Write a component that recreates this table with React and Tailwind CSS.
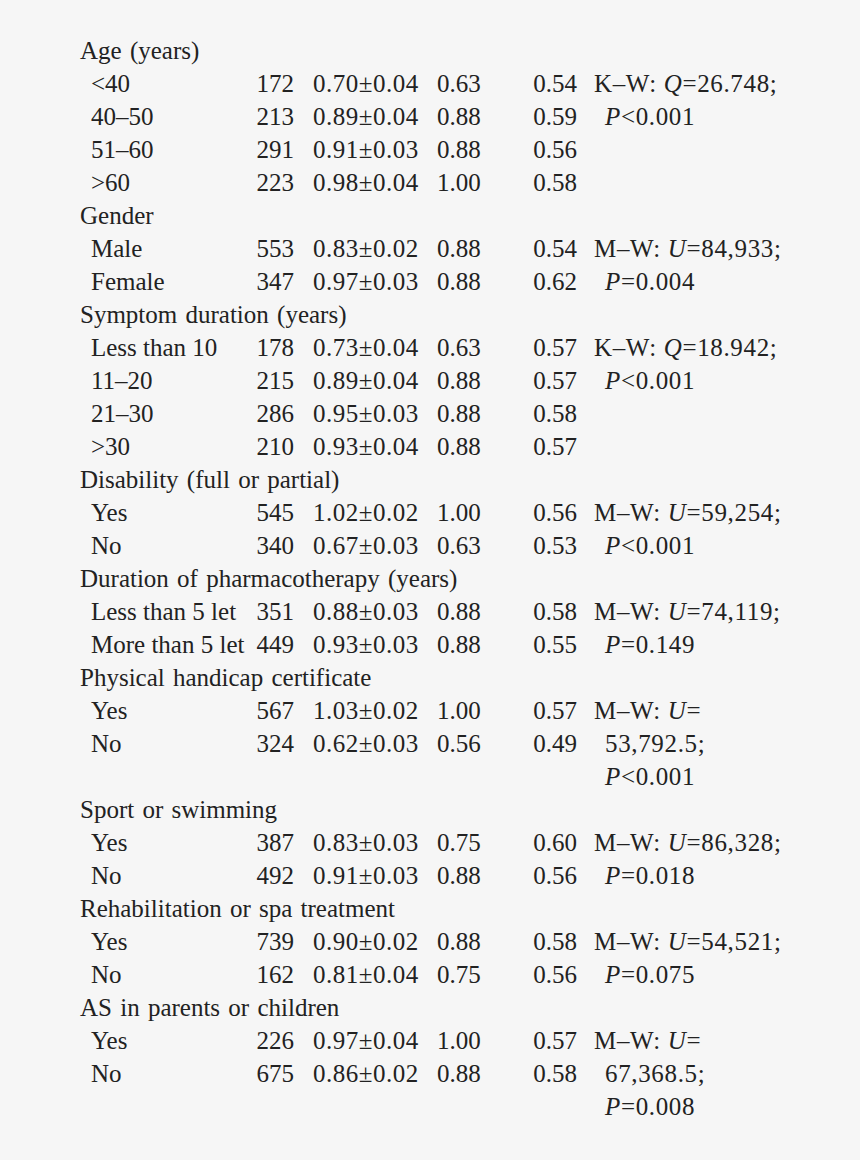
const rows = [
  { h: 'Age (years)' },
  { label: '<40', n: '172', mean: '0.70±0.04', med: '0.63', v: '0.54', test: <>K–W: <i>Q</i>=26.748;</> },
  { label: '40–50', n: '213', mean: '0.89±0.04', med: '0.88', v: '0.59', test: <><i>P</i>&lt;0.001</>, indent: true },
  { label: '51–60', n: '291', mean: '0.91±0.03', med: '0.88', v: '0.56' },
  { label: '>60', n: '223', mean: '0.98±0.04', med: '1.00', v: '0.58' },
  { h: 'Gender' },
  { label: 'Male', n: '553', mean: '0.83±0.02', med: '0.88', v: '0.54', test: <>M–W: <i>U</i>=84,933;</> },
  { label: 'Female', n: '347', mean: '0.97±0.03', med: '0.88', v: '0.62', test: <><i>P</i>=0.004</>, indent: true },
  { h: 'Symptom duration (years)' },
  { label: 'Less than 10', n: '178', mean: '0.73±0.04', med: '0.63', v: '0.57', test: <>K–W: <i>Q</i>=18.942;</> },
  { label: '11–20', n: '215', mean: '0.89±0.04', med: '0.88', v: '0.57', test: <><i>P</i>&lt;0.001</>, indent: true },
  { label: '21–30', n: '286', mean: '0.95±0.03', med: '0.88', v: '0.58' },
  { label: '>30', n: '210', mean: '0.93±0.04', med: '0.88', v: '0.57' },
  { h: 'Disability (full or partial)' },
  { label: 'Yes', n: '545', mean: '1.02±0.02', med: '1.00', v: '0.56', test: <>M–W: <i>U</i>=59,254;</> },
  { label: 'No', n: '340', mean: '0.67±0.03', med: '0.63', v: '0.53', test: <><i>P</i>&lt;0.001</>, indent: true },
  { h: 'Duration of pharmacotherapy (years)' },
  { label: 'Less than 5 let', n: '351', mean: '0.88±0.03', med: '0.88', v: '0.58', test: <>M–W: <i>U</i>=74,119;</> },
  { label: 'More than 5 let', n: '449', mean: '0.93±0.03', med: '0.88', v: '0.55', test: <><i>P</i>=0.149</>, indent: true },
  { h: 'Physical handicap certificate' },
  { label: 'Yes', n: '567', mean: '1.03±0.02', med: '1.00', v: '0.57', test: <>M–W: <i>U</i>=</> },
  { label: 'No', n: '324', mean: '0.62±0.03', med: '0.56', v: '0.49', test: <>53,792.5;</>, indent: true },
  { label: '', test: <><i>P</i>&lt;0.001</>, indent: true },
  { h: 'Sport or swimming' },
  { label: 'Yes', n: '387', mean: '0.83±0.03', med: '0.75', v: '0.60', test: <>M–W: <i>U</i>=86,328;</> },
  { label: 'No', n: '492', mean: '0.91±0.03', med: '0.88', v: '0.56', test: <><i>P</i>=0.018</>, indent: true },
  { h: 'Rehabilitation or spa treatment' },
  { label: 'Yes', n: '739', mean: '0.90±0.02', med: '0.88', v: '0.58', test: <>M–W: <i>U</i>=54,521;</> },
  { label: 'No', n: '162', mean: '0.81±0.04', med: '0.75', v: '0.56', test: <><i>P</i>=0.075</>, indent: true },
  { h: 'AS in parents or children' },
  { label: 'Yes', n: '226', mean: '0.97±0.04', med: '1.00', v: '0.57', test: <>M–W: <i>U</i>=</> },
  { label: 'No', n: '675', mean: '0.86±0.02', med: '0.88', v: '0.58', test: <>67,368.5;</>, indent: true },
  { label: '', test: <><i>P</i>=0.008</>, indent: true },
]

export default function App() {
  return (
    <div
      className="min-h-[1160px] w-[860px] bg-[#f6f6f6] text-[#222] pt-[34px] pl-[80px] text-[25px] leading-[33px]"
      style={{ fontFamily: '"Liberation Serif", "Times New Roman", serif' }}
    >
      <div className="grid grid-cols-[170px_44px_124px_63px_96px_1fr]">
        {rows.map((r, i) =>
          r.h ? (
            <div key={i} className="col-span-6 h-[33px] whitespace-nowrap [word-spacing:2px]">{r.h}</div>
          ) : (
            <Row key={i} r={r} />
          )
        )}
      </div>
    </div>
  )
}

function Row({ r }) {
  return (
    <>
      <div className="h-[33px] pl-[11px] whitespace-nowrap">{r.label}</div>
      <div className="text-right">{r.n}</div>
      <div className="pl-[19px] whitespace-nowrap tracking-[0.5px]">{r.mean}</div>
      <div className="pl-[19px]">{r.med}</div>
      <div className="text-right">{r.v}</div>
      <div className={`whitespace-nowrap tracking-[0.65px] ${r.indent ? 'pl-[28px]' : 'pl-[17px]'}`}>{r.test}</div>
    </>
  )
}
